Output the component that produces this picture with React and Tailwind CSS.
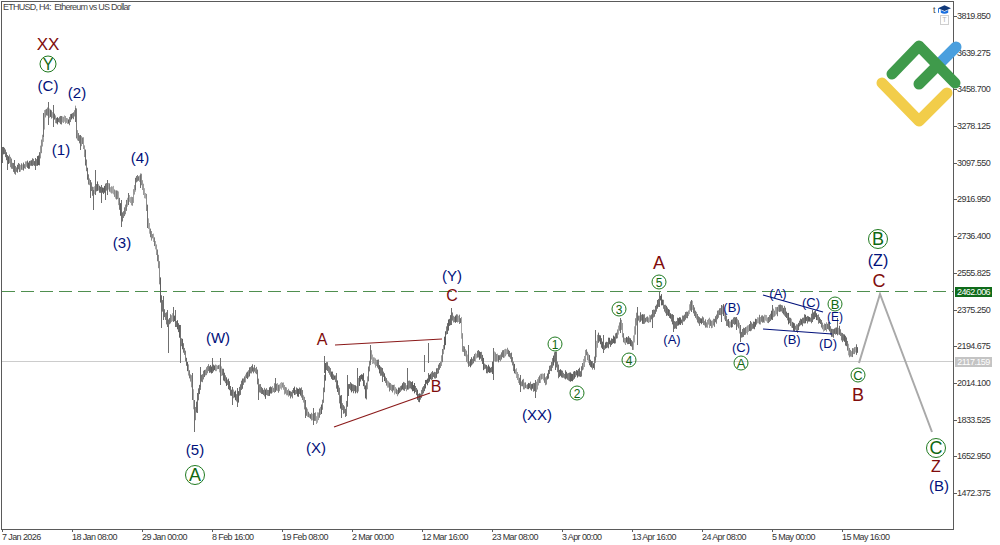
// App.jsx
// ETHUSD H4 chart with Elliott wave marks and the price axes
import { useMemo } from 'react'

const ARIAL = "font-['Liberation_Sans',Arial,sans-serif]"

// price path in page pixels, the bars get noise around it
const PATH = [
  [2, 152], [8, 160], [15, 168], [25, 166], [33, 163], [38, 160], [42, 140], [44, 116], [47, 110], [52, 115], [60, 124],
  [68, 118], [75, 112], [76, 135], [82, 142], [87, 178], [92, 195], [96, 185], [100, 190], [107, 186], [117, 194], [121, 218],
  [125, 207], [128, 198], [132, 200], [135, 182], [140, 180], [145, 197], [147, 220], [150, 232], [155, 245], [158, 262],
  [160, 298], [163, 310], [167, 322], [173, 315], [178, 330], [185, 360], [191, 385], [194, 420], [197, 400], [200, 378],
  [212, 366], [220, 370], [226, 382], [232, 395], [237, 396], [245, 378], [252, 370], [256, 375], [258, 393], [265, 393],
  [275, 387], [285, 390], [300, 392], [306, 411], [316, 420], [322, 400], [325, 362], [330, 375], [335, 378], [340, 405],
  [345, 411], [348, 385], [357, 390], [358, 382], [362, 378], [365, 396], [370, 352], [375, 365], [382, 372], [387, 385],
  [395, 390], [410, 385], [418, 396], [425, 378], [432, 375], [440, 366], [445, 335], [451, 316], [460, 320], [462, 347],
  [468, 360], [480, 356], [483, 368], [491, 372], [493, 354], [500, 357], [507, 352], [512, 363], [520, 384], [528, 384],
  [535, 388], [540, 375], [545, 380], [555, 358], [558, 375], [577, 376], [580, 376], [585, 356], [593, 366], [597, 338],
  [603, 346], [615, 338], [620, 325], [623, 341], [632, 346], [636, 316], [643, 320], [652, 318], [659, 300], [667, 313],
  [675, 324], [682, 320], [691, 306], [698, 318], [713, 322], [722, 312], [727, 324], [735, 320], [740, 334], [752, 325],
  [767, 318], [772, 312], [783, 308], [787, 317], [793, 327], [800, 322], [812, 316], [818, 318], [823, 330], [828, 324],
  [832, 332], [837, 326], [843, 340], [848, 350], [857, 348], [858, 360],
]

// long wicks read off the reference: x, top, bottom
const WICKS = [
  [2, 147, 163], [7, 155, 170], [14, 160, 172], [35, 158, 170], [43, 113, 137], [48, 102, 125], [53, 105, 127], [75, 108, 122],
  [80, 135, 150], [90, 180, 198], [93, 190, 210], [95, 170, 195], [101, 185, 203], [105, 185, 200], [107, 180, 195], [121, 200, 227],
  [128, 193, 205], [135, 178, 190], [140, 175, 188], [147, 205, 228], [161, 300, 328], [163, 296, 320], [167, 310, 327], [173, 307, 322],
  [175, 310, 327], [168, 325, 353], [180, 325, 363], [192, 373, 400], [194, 400, 432], [197, 393, 413], [200, 367, 387], [212, 358, 373],
  [220, 358, 385], [232, 387, 405], [237, 388, 407], [258, 385, 400], [275, 378, 392], [305, 400, 418], [313, 408, 425], [324, 356, 373],
  [341, 395, 418], [347, 375, 395], [357, 368, 393], [370, 345, 363], [382, 368, 382], [407, 368, 385], [424, 355, 372], [428, 343, 363],
  [451, 308, 325], [468, 345, 365], [493, 348, 380], [520, 375, 392], [535, 380, 398], [555, 353, 370], [595, 330, 360], [603, 335, 353],
  [620, 318, 333], [637, 307, 345], [652, 310, 328], [659, 292, 307], [673, 315, 332], [691, 300, 312], [721, 305, 322], [736, 317, 330],
  [740, 325, 342], [772, 305, 320], [812, 310, 322], [837, 318, 335],
]

const DARK = ['#5f5f5f', '#6a6a6a', '#757575', '#808080']
const LIGHT = ['#8c8c8c', '#9a9a9a', '#a8a8a8', '#7a7a7a']

function makeBars() {
  // small fixed random so the picture stays the same every load
  let seed = 11
  const rnd = () => {
    seed = (seed * 16807) % 2147483647
    return seed / 2147483647
  }
  const bars = []
  let walk = 0
  let prev = PATH[0][1]
  let shades = DARK
  for (let i = 0; i < PATH.length - 1; i++) {
    const [x1, y1] = PATH[i]
    const [x2, y2] = PATH[i + 1]
    for (let x = x1; x < x2; x += 1) {
      walk = walk * 0.75 + (rnd() - 0.5) * 4
      const y = y1 + ((y2 - y1) * (x - x1)) / (x2 - x1) + walk
      const up = 1.5 + rnd() * 3
      const down = 1.5 + rnd() * 3
      if (rnd() > 0.85) shades = shades === DARK ? LIGHT : DARK
      bars.push({
        x: x + 0.5,
        top: Math.min(y, prev) - up,
        bottom: Math.max(y, prev) + down,
        color: shades[Math.floor(rnd() * shades.length)],
      })
      prev = y
    }
  }
  return bars
}

const PRICES = [
  '3819.850', '3639.275', '3458.700', '3278.125', '3097.550', '2916.950', '2736.400',
  '2555.825', '2375.250', '2194.675', '2014.100', '1833.525', '1652.950', '1472.375',
]

const TIMES = [
  '7 Jan 2026', '18 Jan 08:00', '29 Jan 00:00', '8 Feb 16:00', '19 Feb 08:00', '2 Mar 00:00', '12 Mar 16:00',
  '23 Mar 08:00', '3 Apr 00:00', '13 Apr 16:00', '24 Apr 08:00', '5 May 00:00', '15 May 16:00',
]

// wave labels, page coordinates of the centre
const NAVY = 'text-[#00107a] text-[15px]'
const NAVY_SM = 'text-[#00107a] text-[13px]'
const MAROON = 'text-[#800c0c] text-[16px]'

const LABELS = [
  { t: 'XX', c: `${MAROON} text-[17px] left-[48px] top-[44px]` },
  { t: '(C)', c: `${NAVY} left-[48px] top-[85px]` },
  { t: '(2)', c: `${NAVY} left-[77px] top-[92px]` },
  { t: '(1)', c: `${NAVY} left-[61px] top-[149px]` },
  { t: '(4)', c: `${NAVY} left-[140px] top-[157px]` },
  { t: '(3)', c: `${NAVY} left-[122px] top-[242px]` },
  { t: '(W)', c: `${NAVY} left-[218px] top-[337px]` },
  { t: '(5)', c: `${NAVY} left-[195px] top-[449px]` },
  { t: '(X)', c: `${NAVY} left-[316px] top-[447px]` },
  { t: 'A', c: `${MAROON} left-[322px] top-[340px]` },
  { t: 'B', c: `${MAROON} left-[436px] top-[387px]` },
  { t: 'C', c: `${MAROON} left-[452px] top-[296px]` },
  { t: '(Y)', c: `${NAVY} left-[452px] top-[275px]` },
  { t: '(XX)', c: `${NAVY} left-[537px] top-[414px]` },
  { t: 'A', c: `${MAROON} text-[18px] left-[659px] top-[263px]` },
  { t: '(A)', c: `${NAVY_SM} left-[672px] top-[339px]` },
  { t: '(B)', c: `${NAVY_SM} left-[732px] top-[307px]` },
  { t: '(C)', c: `${NAVY_SM} left-[741px] top-[347px]` },
  { t: '(A)', c: `${NAVY_SM} left-[778px] top-[293px]` },
  { t: '(C)', c: `${NAVY_SM} left-[811px] top-[302px]` },
  { t: '(B)', c: `${NAVY_SM} left-[792px] top-[339px]` },
  { t: '(D)', c: `${NAVY_SM} left-[828px] top-[343px]` },
  { t: '(E)', c: 'text-[#00107a] text-[12px] left-[835px] top-[317px]' },
  { t: 'B', c: `${MAROON} text-[18px] left-[858px] top-[395px]` },
  { t: '(Z)', c: `${NAVY} text-[16px] left-[878px] top-[261px]` },
  { t: 'C', c: `${MAROON} text-[18px] left-[879px] top-[281px]` },
  { t: 'Z', c: `${MAROON} left-[936px] top-[467px]` },
  { t: '(B)', c: `${NAVY} left-[939px] top-[485px]` },
]

// circled marks, three sizes
const SMALL = 'w-[15px] h-[15px] text-[13px]'
const TINY = 'w-[15px] h-[15px] text-[12px]'
const MID = 'w-[17px] h-[17px] text-[16px]'
const BIG = 'w-[20px] h-[20px] text-[18px]'

const CIRCLES = [
  { t: 'Y', c: `${MID} left-[48px] top-[64px]` },
  { t: 'A', c: `${BIG} left-[195px] top-[475px]` },
  { t: '1', c: `${TINY} left-[555px] top-[344px]` },
  { t: '2', c: `${TINY} left-[577px] top-[393px]` },
  { t: '3', c: `${TINY} left-[619px] top-[309px]` },
  { t: '4', c: `${TINY} left-[629px] top-[360px]` },
  { t: '5', c: `${TINY} left-[659px] top-[282px]` },
  { t: 'A', c: `${SMALL} left-[741px] top-[363px]` },
  { t: 'B', c: `${SMALL} left-[835px] top-[304px]` },
  { t: 'C', c: `${SMALL} left-[858px] top-[375px]` },
  { t: 'B', c: `${BIG} left-[878px] top-[239px]` },
  { t: 'C', c: `${BIG} left-[936px] top-[448px]` },
]

function PriceChart() {
  const bars = useMemo(makeBars, [])
  return (
    <svg className="absolute left-0 top-0 w-full h-full" viewBox="2 2 951 527">
      {/* level lines */}
      <line x1="2" x2="953" y1="361.5" y2="361.5" stroke="#cccccc" />
      <line x1="2" x2="953" y1="291.5" y2="291.5" stroke="#4f8f4f" strokeDasharray="13 6" />

      {/* price */}
      {bars.map((b, i) => (
        <line key={i} x1={b.x} x2={b.x} y1={b.top} y2={b.bottom} stroke={b.color} />
      ))}
      {WICKS.map(([x, top, bottom]) => (
        <line key={x} x1={x + 0.5} x2={x + 0.5} y1={top} y2={bottom} stroke="#6f6f6f" />
      ))}

      {/* projected path */}
      <polyline points="859,363 880,294 932,432" fill="none" stroke="#a9a9a9" strokeWidth="2" />

      {/* trend lines */}
      <line x1="335" y1="345" x2="442" y2="339" stroke="#8b1a1a" strokeWidth="1.2" />
      <line x1="334" y1="427" x2="430" y2="393" stroke="#8b1a1a" strokeWidth="1.2" />
      <line x1="763" y1="295" x2="823" y2="312" stroke="#00107a" strokeWidth="1.2" />
      <line x1="763" y1="329" x2="832" y2="334" stroke="#00107a" strokeWidth="1.2" />
    </svg>
  )
}

function Logo() {
  return (
    <svg className="absolute left-[870px] top-[30px] w-[100px] h-[100px]" viewBox="870 30 100 100">
      <path d="M882 83 L919 121 L947 93" fill="none" stroke="#f2cd4a" strokeWidth="11" strokeLinecap="round" strokeLinejoin="round" />
      <path d="M937 66 L956 47" fill="none" stroke="#4a9fde" strokeWidth="11" strokeLinecap="round" />
      <path d="M892 74 L919 46 L955 83" fill="none" stroke="#3f9a4b" strokeWidth="11" strokeLinecap="round" strokeLinejoin="round" />
      <path d="M919 84 L937 66" fill="none" stroke="#3f9a4b" strokeWidth="11" strokeLinecap="round" />
    </svg>
  )
}

function App() {
  return (
    <div className={`relative w-[1000px] h-[545px] bg-white overflow-hidden flex flex-col ${ARIAL}`}>

      <div className="flex h-[530px] pl-px pt-px">
        {/* chart area */}
        <div className="relative w-[953px] border border-[#5a5a5a]">
          <PriceChart />
        </div>

        {/* price axis */}
        <div className="pt-[9px] flex flex-col">
          {PRICES.map((p) => (
            <div key={p} className="h-[36.7px] flex items-start">
              <span className="w-[3px] h-px bg-[#5a5a5a] mt-[6px]" />
              <span className="text-[9px] tracking-[-0.55px] leading-[13px] text-[#333333]">{p}</span>
            </div>
          ))}
        </div>
      </div>

      {/* time axis */}
      <div className="flex pl-[2px]">
        {TIMES.map((t) => (
          <div key={t} className="w-[70px] border-l border-[#5a5a5a] h-[3px] relative -top-px">
            <span className="absolute -left-px top-[3px] text-[9px] tracking-[-0.6px] leading-[11px] whitespace-nowrap text-[#333333]">{t}</span>
          </div>
        ))}
      </div>

      {/* header line */}
      <div className="absolute left-[3px] top-[2px] text-[9px] tracking-[-0.75px] leading-[11px] text-[#444444] whitespace-pre">
        ETHUSD, H4:  Ethereum vs US Dollar
      </div>

      <Logo />

      {/* price tags */}
      <div className="absolute left-[955px] top-[287px] w-[37px] h-[10px] bg-[#0f6b1a] text-white text-[9px] tracking-[-0.55px] leading-[10px] text-center">2462.006</div>
      <div className="absolute left-[955px] top-[357px] w-[37px] h-[10px] bg-[#c4c4c4] text-white text-[9px] tracking-[-0.55px] leading-[10px] text-center">2117.159</div>

      {/* top corner icons */}
      <div className="absolute left-[933px] top-[5px] text-[9px] leading-[11px] text-[#444444]">t</div>
      <svg className="absolute left-[938px] top-[5px] w-[13px] h-[10px]" viewBox="0 0 14 10">
        <path d="M7 0 L14 3 L7 6 L0 3 Z" fill="#123a7a" />
        <path d="M3 5 L7 7 L11 5 L11 8 Q7 10 3 8 Z" fill="#1a6fe0" />
        <rect x="0" y="3" width="1" height="5" fill="#1a6fe0" />
      </svg>
      <div className="absolute left-[940px] top-[15px] w-[9px] h-[10px] border border-[#cfcfcf] text-[7px] leading-[8px] text-center text-[#b5b5b5]">T</div>

      {/* wave marks */}
      {LABELS.map((l, i) => (
        <span key={i} className={`absolute -translate-x-1/2 -translate-y-1/2 leading-none whitespace-nowrap ${l.c}`}>
          {l.t}
        </span>
      ))}
      {CIRCLES.map((l, i) => (
        <span
          key={i}
          className={`absolute -translate-x-1/2 -translate-y-1/2 rounded-full border border-[#1f7a1f] text-[#116811] flex items-center justify-center leading-none ${l.c}`}
        >
          {l.t}
        </span>
      ))}
    </div>
  )
}

export default App
